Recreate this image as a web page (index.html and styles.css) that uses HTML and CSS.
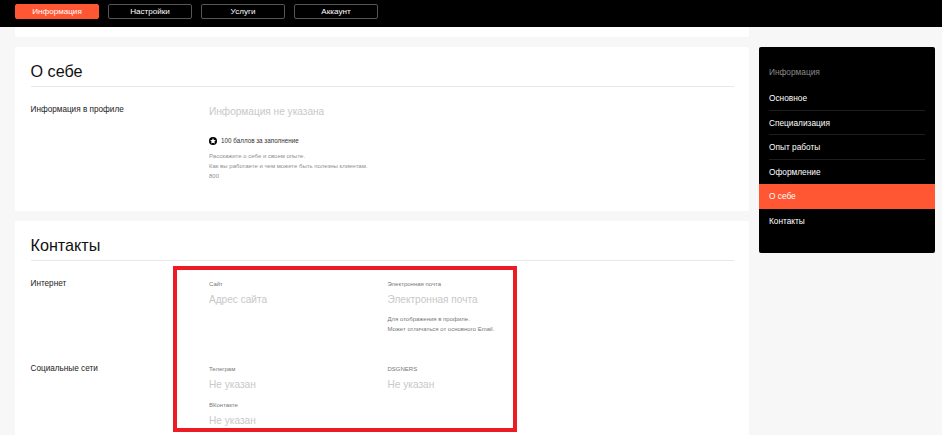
FILE: index.html
```html
<!DOCTYPE html>
<html lang="ru">
<head>
<meta charset="utf-8">
<title>Профиль</title>
<link rel="stylesheet" href="styles.css">
</head>
<body>
<header class="topbar">
  <a class="tab tab-active">Информация</a>
  <a class="tab">Настройки</a>
  <a class="tab">Услуги</a>
  <a class="tab">Аккаунт</a>
</header>
<div class="layout">
  <main class="content">
    <div class="card card-stub"></div>
    <section class="card card-about">
      <h2 class="card-title">О себе</h2>
      <div class="row">
        <div class="row-label">Информация в профиле</div>
        <div class="row-body">
          <div class="placeholder">Информация не указана</div>
          <div class="bonus">
            <svg class="bonus-icon" viewBox="0 0 16 16" width="8" height="8"><circle cx="8" cy="8" r="8" fill="#000"/><path d="M8 2.200l1.800 3.700 4 .5-2.900 2.800.8 4L8 11.300 4.300 13.200l.8-4-2.900-2.800 4-.5z" fill="#fff"/></svg>
            <span>100 баллов за заполнение</span>
          </div>
          <p class="hint">Расскажите о себе и своем опыте.<br>Как вы работаете и чем можете быть полезны клиентам.<br>800</p>
        </div>
      </div>
    </section>
    <section class="card card-contacts">
      <h2 class="card-title">Контакты</h2>
      <div class="row row-internet">
        <div class="row-label">Интернет</div>
        <div class="fields">
          <div class="field">
            <div class="field-label">Сайт</div>
            <div class="placeholder">Адрес сайта</div>
          </div>
          <div class="field">
            <div class="field-label">Электронная почта</div>
            <div class="placeholder">Электронная почта</div>
            <p class="note">Для отображения в профиле.<br>Может отличаться от основного Email.</p>
          </div>
        </div>
      </div>
      <div class="row">
        <div class="row-label">Социальные сети</div>
        <div class="fields">
          <div class="field">
            <div class="field-label">Телеграм</div>
            <div class="placeholder">Не указан</div>
          </div>
          <div class="field">
            <div class="field-label">DSGNERS</div>
            <div class="placeholder">Не указан</div>
          </div>
          <div class="field">
            <div class="field-label">ВКонтакте</div>
            <div class="placeholder">Не указан</div>
          </div>
        </div>
      </div>
    </section>
  </main>
  <aside class="sidebar">
    <div class="side-title">Информация</div>
    <nav class="side-nav">
      <a class="side-item">Основное</a>
      <a class="side-item">Специализация</a>
      <a class="side-item">Опыт работы</a>
      <a class="side-item side-plain">Оформление</a>
      <a class="side-item side-active">О себе</a>
      <a class="side-item side-plain">Контакты</a>
    </nav>
  </aside>
</div>
<div class="highlight"></div>
</body>
</html>
```
FILE: styles.css
```css
* { box-sizing: border-box; }
html, body { height: 100%; }
body {
  margin: 0;
  background: #f7f7f7;
  font-family: "Liberation Sans", Arial, sans-serif;
  color: #1a1a1a;
  overflow: hidden;
  position: relative;
}
.topbar {
  height: 27px;
  background: #000;
  display: flex;
  gap: 9px;
  padding: 4px 15px 0;
}
.tab {
  width: 84px;
  height: 15px;
  border: 1px solid #555;
  border-radius: 2px;
  color: #fff;
  font-size: 8.100px;
  line-height: 13px;
  text-align: center;
}
.tab-active {
  background: #ff5733;
  border-color: #ff5733;
}
.layout {
  display: flex;
  gap: 10px;
  padding: 0 7px 0 15px;
  align-items: flex-start;
}
.content {
  width: 734px;
  display: flex;
  flex-direction: column;
  gap: 10px;
}
.card {
  background: #fff;
  border-radius: 2px;
  padding: 0 15px 0 15.500px;
}
.card-stub { height: 10px; }
.card-about { height: 164px; }
.card-contacts { height: 230px; }
.card-title {
  margin: 0;
  height: 40px;
  padding-top: 14px;
  font-size: 16.200px;
  line-height: 21px;
  font-weight: 400;
  color: #111;
  border-bottom: 1px solid #e8e8e8;
}
.row { display: flex; }
.row-label {
  width: 178.500px;
  flex: none;
  font-size: 8.200px;
  line-height: 12px;
  padding-top: 17px;
  color: #222;
}
.row-body { padding-top: 17px; }
.placeholder {
  font-size: 10.100px;
  line-height: 16px;
  color: #c8c8c8;
}
.bonus {
  display: flex;
  align-items: center;
  gap: 4px;
  margin-top: 17px;
  font-size: 6.300px;
  line-height: 8px;
  color: #333;
}
.hint, .note {
  margin: 6px 0 0;
  font-size: 6px;
  line-height: 10px;
  color: #8f8f8f;
}
.note { color: #777; margin-top: 6px; }
.fields {
  display: flex;
  flex-wrap: wrap;
  width: 358px;
  padding-top: 18px;
  row-gap: 7px;
}
.field { width: 178.500px; }
.field-label {
  font-size: 6px;
  line-height: 10px;
  color: #777;
  margin-bottom: 3px;
}
.row-internet { height: 85px; }
.sidebar {
  width: 176px;
  height: 206px;
  margin-top: 20px;
  background: #000;
  border-radius: 2px;
  padding-top: 20px;
  color: #fff;
}
.side-title {
  padding: 0 10px;
  font-size: 8.300px;
  line-height: 10px;
  color: #8a8a8a;
  margin-bottom: 9px;
}
.side-nav { display: flex; flex-direction: column; }
.side-item {
  height: 24.600px;
  margin: 0 10px;
  font-size: 8.300px;
  line-height: 24px;
  color: #fff;
  border-bottom: 1px solid #1e1e1e;
}
.side-plain { border-bottom: 0; }
.side-active {
  margin: 0;
  padding: 0 10px;
  background: #ff5733;
  border-bottom: 0;
}
.highlight {
  position: absolute;
  left: 173px;
  top: 266px;
  width: 344px;
  height: 166px;
  border: 4px solid #ed1c24;
}
```
